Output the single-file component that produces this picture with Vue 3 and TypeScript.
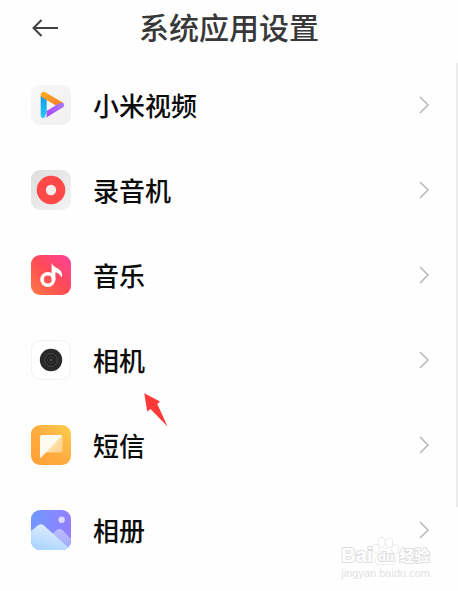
<script setup lang="ts">
type AppIcon = 'video' | 'recorder' | 'music' | 'camera' | 'message' | 'gallery'

interface SystemApp {
  icon: AppIcon
  name: string
}

const apps: SystemApp[] = [
  { icon: 'video', name: '小米视频' },
  { icon: 'recorder', name: '录音机' },
  { icon: 'music', name: '音乐' },
  { icon: 'camera', name: '相机' },
  { icon: 'message', name: '短信' },
  { icon: 'gallery', name: '相册' },
]
</script>

<template>
  <main class="screen">
    <header class="bar">
      <button class="back" type="button" aria-label="返回">
        <svg width="28" height="20" viewBox="0 0 28 20" fill="none" stroke="#404040" stroke-width="2">
          <path d="M10.5 2 2.5 10l8 8M2.5 10H27" />
        </svg>
      </button>
      <h1 class="title">系统应用设置</h1>
    </header>

    <ul class="list">
      <li v-for="app in apps" :key="app.icon" class="item">
        <a class="row" href="#">
          <svg v-if="app.icon === 'video'" class="icon" viewBox="0 0 40 40">
            <defs>
              <linearGradient id="v-bg" x1="0" y1="0" x2="1" y2="1">
                <stop offset="0" stop-color="#f8f8f8" /><stop offset="1" stop-color="#f0f0f0" />
              </linearGradient>
              <linearGradient id="v-blue" x1="0" y1="0" x2="0" y2="1">
                <stop offset="0" stop-color="#1496e6" /><stop offset="1" stop-color="#23ccff" />
              </linearGradient>
              <linearGradient id="v-purple" x1="0" y1="1" x2="1" y2="0">
                <stop offset="0" stop-color="#b13cff" /><stop offset="1" stop-color="#a080ff" />
              </linearGradient>
              <linearGradient id="v-orange" x1="0" y1="0" x2="1" y2="1">
                <stop offset="0" stop-color="#ffa51f" /><stop offset="1" stop-color="#f47e2b" />
              </linearGradient>
            </defs>
            <rect width="40" height="40" rx="9" fill="url(#v-bg)" />
            <path d="M9.700 11h6v16l-2 5.500q-4 1.500-4-2.500z" fill="url(#v-blue)" />
            <g fill="none" stroke-width="6" stroke-linecap="round">
              <path d="M12.800 9.800 30 20" stroke="url(#v-orange)" />
            </g>
            <path d="M15.700 26 26 19.500l5.500-2.100q3.200 2.600 0 5.200L15 32.700q.7-1 .7-3z" fill="url(#v-purple)" />
          </svg>

          <svg v-else-if="app.icon === 'recorder'" class="icon" viewBox="0 0 40 40">
            <defs>
              <linearGradient id="r-bg" x1="0" y1="0" x2="1" y2="1">
                <stop offset="0" stop-color="#dedede" /><stop offset="1" stop-color="#f3f3f3" />
              </linearGradient>
            </defs>
            <rect width="40" height="40" rx="9" fill="url(#r-bg)" />
            <circle cx="20" cy="20" r="14.300" fill="#ff4848" />
            <circle cx="20" cy="20" r="5.200" fill="#f4eeee" />
          </svg>

          <svg v-else-if="app.icon === 'music'" class="icon" viewBox="0 0 40 40">
            <defs>
              <linearGradient id="m-bg" x1="0" y1="1" x2="1" y2="0">
                <stop offset="0" stop-color="#ff7a45" /><stop offset=".5" stop-color="#ff4a55" />
                <stop offset="1" stop-color="#ff429d" />
              </linearGradient>
            </defs>
            <rect width="40" height="40" rx="9" fill="url(#m-bg)" />
            <circle cx="16.800" cy="24.500" r="5.800" fill="none" stroke="#fff" stroke-width="3.600" />
            <path d="M20.600 7.400c.8 3 3 4.200 6.200 6.200 4 2.600 5.300 5.400 3.700 9-1.500-3.800-3.900-5-6.100-5.400v8h-3.800z" fill="#fff" />
          </svg>

          <svg v-else-if="app.icon === 'camera'" class="icon" viewBox="0 0 40 40">
            <rect x=".5" y=".5" width="39" height="39" rx="9" fill="#fff" stroke="#f3f3f3" />
            <circle cx="20" cy="20" r="11.200" fill="#292929" />
            <circle cx="20" cy="20" r="6.300" fill="#222" stroke="#484848" />
            <circle cx="20" cy="20" r="3.600" fill="#252525" stroke="#353535" />
            <circle cx="20" cy="20" r="1" fill="#606060" />
          </svg>

          <svg v-else-if="app.icon === 'message'" class="icon" viewBox="0 0 40 40">
            <defs>
              <linearGradient id="s-bg" x1="0" y1="1" x2="1" y2="0">
                <stop offset="0" stop-color="#ff9f35" /><stop offset=".5" stop-color="#ffad40" />
                <stop offset="1" stop-color="#ffcf4d" />
              </linearGradient>
              <linearGradient id="s-fold" x1="0" y1="0" x2="1" y2="1">
                <stop offset="0" stop-color="#ffefc9" /><stop offset="1" stop-color="#ffcf87" />
              </linearGradient>
            </defs>
            <rect width="40" height="40" rx="9" fill="url(#s-bg)" />
            <path d="M31.500 11v14.500a2 2 0 0 1-2 2H14z" fill="url(#s-fold)" />
            <path d="M9 12a2 2 0 0 1 2-2h19q2 0 .8 1.200L9 33.500z" fill="#fffaf0" />
          </svg>

          <svg v-else class="icon" viewBox="0 0 40 40">
            <defs>
              <linearGradient id="g-bg" x1="0" y1=".4" x2="1" y2=".5">
                <stop offset="0" stop-color="#7097ff" /><stop offset="1" stop-color="#957eff" />
              </linearGradient>
              <linearGradient id="g-front" x1=".6" y1="0" x2=".2" y2="1">
                <stop offset="0" stop-color="#e2efff" /><stop offset="1" stop-color="#a9d4ff" />
              </linearGradient>
              <linearGradient id="g-back" x1="0" y1="0" x2="0" y2="1">
                <stop offset="0" stop-color="#bdbcff" /><stop offset="1" stop-color="#9da6ff" />
              </linearGradient>
              <clipPath id="g-clip"><rect width="40" height="40" rx="9" /></clipPath>
            </defs>
            <g clip-path="url(#g-clip)">
              <rect width="40" height="40" fill="url(#g-bg)" />
              <path d="M14 30 25.500 20.300q3-2.400 6 0L40 29v11H14z" fill="url(#g-back)" />
              <path d="M0 21 7 15.300q2.800-2 5.600 0L38 38v2H0z" fill="url(#g-front)" />
              <circle cx="30.600" cy="9.800" r="3.200" fill="#d9d8ff" />
            </g>
          </svg>

          <span class="name">{{ app.name }}</span>
          <svg class="chevron" width="12" height="18" viewBox="0 0 12 18" fill="none" stroke="#b8b8b8" stroke-width="1.500">
            <path d="m2 1 8 8-8 8" />
          </svg>
        </a>
        <svg v-if="app.icon === 'camera'" class="pointer" width="24" height="34" viewBox="0 0 24 34">
          <path d="M.3.300 16 8.500 13.300 11 23.500 33.500 6.500 16 3.200 18.500z" fill="#ff3838" />
        </svg>
      </li>
    </ul>

    <div class="scrollbar"></div>

    <div class="watermark">
      <div class="brand">
        <span class="latin">Bai</span>
        <span class="paw">
          <svg width="27" height="29" viewBox="0 0 28 30" fill="#fff" stroke="#d8d8d8">
            <ellipse cx="4" cy="12" rx="3.300" ry="4.300" />
            <ellipse cx="10" cy="5.500" rx="3.300" ry="4.800" />
            <ellipse cx="18" cy="5.500" rx="3.300" ry="4.800" />
            <ellipse cx="24" cy="12.500" rx="3.300" ry="4.300" />
            <path d="M14 12.500c3.500 0 4.500 3.500 8 6.500 3.500 3.200 3.500 9-1.500 9.500h-13c-5-.5-5-6.300-1.500-9.500 3.500-3 4.500-6.500 8-6.500z" />
          </svg>
          <span class="du">du</span>
        </span>
        <span class="hanzi">经验</span>
      </div>
      <div class="site">jingyan.baidu.com</div>
    </div>
  </main>
</template>

<style>
body {
  background: #fefefe;
}
</style>

<style scoped>
.screen {
  position: relative;
  min-height: 100vh;
  box-sizing: border-box;
  overflow: hidden;
  font-family: "Noto Sans CJK SC", sans-serif;
  font-weight: 500;
}

.bar {
  display: grid;
  grid-template-columns: 60px 1fr 60px;
  align-items: center;
  height: 56px;
}

.back {
  display: flex;
  justify-content: flex-end;
  padding: 0 1px 0 0;
  border: 0;
  background: none;
}

.title {
  margin: 0;
  padding-bottom: 4px;
  font-size: 30px;
  line-height: 40px;
  font-weight: 500;
  text-align: center;
  color: #383838;
}

.list {
  margin: 0;
  padding: 6px 0 0;
  list-style: none;
}

.item {
  position: relative;
}

.row {
  display: flex;
  align-items: center;
  gap: 22px;
  height: 85px;
  padding: 0 28px 0 31px;
  color: #0c0c0c;
  text-decoration: none;
}

.icon {
  flex: none;
  width: 40px;
  height: 40px;
}

.name {
  flex: 1;
  font-size: 26px;
  line-height: 40px;
}

.chevron {
  flex: none;
}

.pointer {
  position: absolute;
  left: 144px;
  top: 76px;
  z-index: 1;
}

.scrollbar {
  position: absolute;
  top: 63px;
  right: 0;
  width: 2px;
  height: 444px;
  background: #ececec;
}

.watermark {
  position: absolute;
  right: 28px;
  bottom: 11px;
  color: #fff;
  -webkit-text-stroke: 2px #dedede;
  paint-order: stroke fill;
}

.brand {
  display: flex;
  align-items: flex-end;
  height: 30px;
}

.latin {
  font: bold 20px/22px "Liberation Sans", sans-serif;
}

.paw {
  position: relative;
  display: flex;
}

.du {
  position: absolute;
  inset: auto 0 1px;
  text-align: center;
  font: bold 13px/16px "Liberation Sans", sans-serif;
}

.hanzi {
  font-size: 15px;
  line-height: 22px;
  font-weight: 700;
}

.site {
  font: 11px/14px "Liberation Sans", sans-serif;
  color: #e2e2e2;
  -webkit-text-stroke: 0;
}
</style>
